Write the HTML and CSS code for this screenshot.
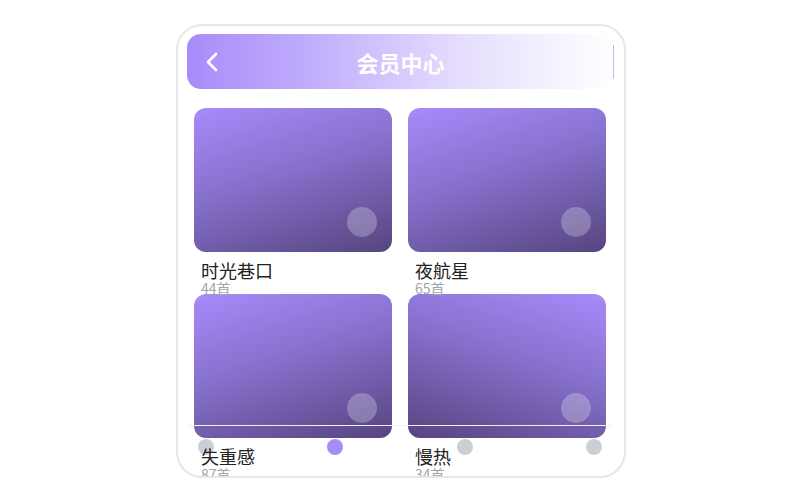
FILE: index.html
```html
<!DOCTYPE html>
<html lang="zh-CN">
<head>
  <meta charset="UTF-8" />
  <title>会员中心</title>
  <meta name="viewport" content="width=device-width, initial-scale=1" />
  <link rel="stylesheet" href="styles.css">
</head>
<body>
  <div class="phone">
    <header class="topbar">
      <span class="back">
        <svg width="14" height="20" viewBox="0 0 14 20"><path d="M11 2 L3 10 L11 18" fill="none" stroke="#fff" stroke-width="2.6" stroke-linecap="round" stroke-linejoin="round"/></svg>
      </span>
      <h1>会员中心</h1>
      <span class="edge"></span>
    </header>

    <div class="grid">
      <div class="item">
        <div class="cover"><span class="play"></span></div>
        <div class="info">
          <div class="name">时光巷口</div>
          <div class="count">44首</div>
        </div>
      </div>
      <div class="item">
        <div class="cover"><span class="play"></span></div>
        <div class="info">
          <div class="name">夜航星</div>
          <div class="count">65首</div>
        </div>
      </div>
      <div class="item">
        <div class="cover"><span class="play"></span></div>
        <div class="info">
          <div class="name">失重感</div>
          <div class="count">87首</div>
        </div>
      </div>
      <div class="item">
        <div class="cover flip"><span class="play"></span></div>
        <div class="info">
          <div class="name">慢热</div>
          <div class="count">34首</div>
        </div>
      </div>
    </div>

    <nav class="tabbar">
      <span class="dot"></span>
      <span class="dot active"></span>
      <span class="dot"></span>
      <span class="dot"></span>
    </nav>
  </div>
</body>
</html>
```

FILE: styles.css
```css
body {
  margin: 0;
  padding-top: 24px;
  display: flex;
  justify-content: center;
  font-family: "Noto Sans CJK SC", "Noto Sans", sans-serif;
  background: #ffffff;
  color: #222222;
}
.phone {
  position: relative;
  width: 446px;
  height: 450px;
  margin-left: 2px;
  border: 2px solid #e6e6eb;
  border-radius: 26px;
  overflow: hidden;
  background: #ffffff;
}
.topbar {
  display: grid;
  grid-template-columns: 1fr auto 1fr;
  align-items: center;
  height: 55px;
  margin: 8px 10px 0 9px;
  padding: 0 0 0 18px;
  border-radius: 14px;
  background: linear-gradient(90deg, #a78bfa 0%, #c6b5fc 35%, #e6defe 65%, #ffffff 100%);
}
.back {
  display: flex;
  width: 14px;
}
.topbar h1 {
  margin: 0 0 0 -18px;
  font-size: 22px;
  font-weight: 700;
  color: #ffffff;
}
.edge {
  justify-self: end;
  width: 1px;
  height: 34px;
  background: #c4b5fd;
}
.grid {
  display: grid;
  grid-template-columns: 198px 198px;
  grid-auto-rows: 186px;
  column-gap: 16px;
  margin: 19px 18px 0 16px;
}
.cover {
  position: relative;
  height: 144px;
  border-radius: 12px;
  background: linear-gradient(162deg, #a78bfa 0%, #8670cc 45%, #56457f 100%);
}
.cover.flip {
  background: linear-gradient(198deg, #a78bfa 0%, #8670cc 45%, #56457f 100%);
}
.play {
  position: absolute;
  right: 15px;
  bottom: 15px;
  width: 30px;
  height: 30px;
  border-radius: 50%;
  background: rgba(255, 255, 255, 0.25);
}
.info {
  position: relative;
  z-index: 2;
  margin-top: 8px;
  padding-left: 7px;
}
.name {
  font-size: 18px;
  line-height: 20px;
  color: #222222;
}
.count {
  font-size: 14px;
  line-height: 16px;
  color: #a0a5ad;
}
.tabbar {
  position: absolute;
  z-index: 1;
  left: 10px;
  right: 12px;
  bottom: 0;
  height: 37px;
  padding: 13px 10px 0;
  display: flex;
  justify-content: space-between;
  align-items: flex-start;
  border-top: 1px solid #eeeef3;
}
.dot {
  width: 16px;
  height: 16px;
  border-radius: 50%;
  background: #cbcfd5;
}
.dot.active {
  background: #a78bfa;
}
```
